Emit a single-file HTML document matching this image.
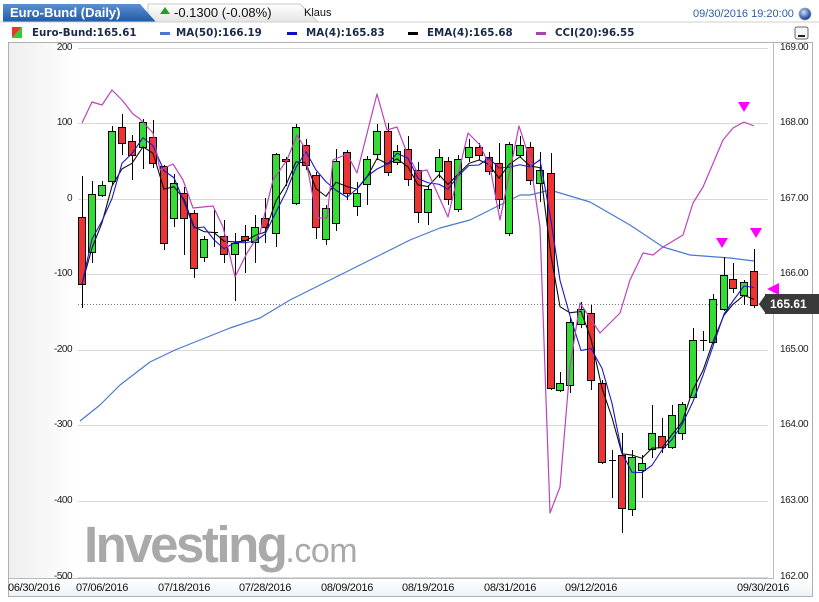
<!DOCTYPE html>
<html><head><meta charset="utf-8"><style>
*{margin:0;padding:0;box-sizing:border-box}
body{width:819px;height:602px;background:#fff;font-family:"Liberation Sans",Arial,sans-serif;position:relative;overflow:hidden}
.t{position:absolute;white-space:nowrap}
.lg{font-size:10.3px;font-weight:bold;color:#1a2a48;font-family:'DejaVu Sans',sans-serif;top:27px}
</style></head><body>
<svg width="819" height="602" style="position:absolute;left:0;top:0" id="s">
<defs>
<linearGradient id="tab" x1="0" y1="0" x2="0" y2="1"><stop offset="0" stop-color="#5b8fd0"/><stop offset="1" stop-color="#1f5aa8"/></linearGradient>
<linearGradient id="tab2" x1="0" y1="0" x2="0" y2="1"><stop offset="0" stop-color="#ffffff"/><stop offset="1" stop-color="#e4e4e4"/></linearGradient>
<linearGradient id="lg" x1="0" y1="0" x2="1" y2="0"><stop offset="0" stop-color="#efefef"/><stop offset="1" stop-color="#ffffff"/></linearGradient>
<linearGradient id="ax" x1="0" y1="0" x2="0" y2="1"><stop offset="0" stop-color="#ffffff"/><stop offset="1" stop-color="#eef3f8"/></linearGradient>
<radialGradient id="ball" cx="0.4" cy="0.35" r="0.6"><stop offset="0" stop-color="#cfe0ff"/><stop offset="1" stop-color="#1a3f95"/></radialGradient>
</defs>
<path d="M148,4 L300,4 L318,22 L148,22 Z" fill="url(#tab2)" stroke="#c8c8c8"/>
<path d="M3,4 L140,4 L156,22 L3,22 Z" fill="url(#tab)"/>
<line x1="0" y1="22" x2="819" y2="22" stroke="#cfcfcf"/>
<circle cx="805" cy="14" r="6" fill="url(#ball)" stroke="#8aa" stroke-width="0.8"/>
<polygon points="12,27 22,27 12,38" fill="#e33"/><polygon points="22,27 22,38 12,38" fill="#3c3"/>
<rect x="160" y="32" width="10" height="3" fill="#4a78d0"/>
<rect x="287" y="32" width="10" height="3" fill="#1010c0"/>
<rect x="408" y="32" width="10" height="3" fill="#000"/>
<rect x="536" y="32" width="10" height="3" fill="#b040b0"/>
<rect x="795" y="27" width="13" height="12" rx="2" fill="#f6f6f6" stroke="#666"/>
<rect x="798" y="35" width="7" height="2" fill="#222"/>
<rect x="8.5" y="42.5" width="804" height="554" fill="#fff" stroke="#b0b0b0"/>
<rect x="9" y="43" width="70" height="536" fill="url(#lg)"/>
<rect x="9" y="579" width="803" height="17" fill="url(#ax)"/>
<line x1="9" y1="578.5" x2="773" y2="578.5" stroke="#bbb"/>
<line x1="773.5" y1="43" x2="773.5" y2="579" stroke="#bbb"/>
<g stroke="#d8d8d8" stroke-width="1" id="grid"></g>
<line x1="78" y1="304.5" x2="768" y2="304.5" stroke="#777" stroke-dasharray="1,2"/>
<g id="c"></g>
</svg>
<div class="t" style="left:10px;top:5px;color:#fff;font-size:13px;font-weight:bold">Euro-Bund (Daily)</div>
<div class="t" style="left:160px;top:7px;width:0;height:0;border-left:5px solid transparent;border-right:5px solid transparent;border-bottom:7px solid #2a9a2a"></div>
<div class="t" style="left:174px;top:5px;font-size:13px;color:#111">-0.1300 (-0.08%)</div>
<div class="t" style="left:304px;top:7px;font-size:11px;color:#111">Klaus</div>
<div class="t" style="left:693px;top:8px;font-size:11px;color:#2a5da8">09/30/2016 19:20:00</div>
<div class="t lg" style="left:32px">Euro-Bund:165.61</div>
<div class="t lg" style="left:176px">MA(50):166.19</div>
<div class="t lg" style="left:306px">MA(4):165.83</div>
<div class="t lg" style="left:427px">EMA(4):165.68</div>
<div class="t lg" style="left:555px">CCI(20):96.55</div>
<div id="labels"></div>
<div class="t" style="left:84px;top:515px;font-size:51px;font-weight:bold;color:#a9a9a9;letter-spacing:-2.5px">Investing<span style="font-weight:normal;font-size:34px;letter-spacing:-0.5px">.com</span></div>
<div class="t" style="left:765px;top:294px;width:54px;height:20px;background:#3a3a3a;color:#fff;font-size:12px;font-weight:bold;line-height:20px;padding-left:5px">165.61</div>
<div class="t" style="left:759px;top:294px;width:0;height:0;border-top:10px solid transparent;border-bottom:10px solid transparent;border-right:7px solid #3a3a3a"></div>
<script>
var NS="http://www.w3.org/2000/svg",g=document.getElementById('c'),gr=document.getElementById('grid');
function el(p,t,a){var e=document.createElementNS(NS,t);for(var k in a)e.setAttribute(k,a[k]);p.appendChild(e);return e}
var ys=[48,123,199,274,350,425,501,577];
ys.forEach(function(y){el(gr,'line',{x1:78,x2:768,y1:y+.5,y2:y+.5})});
var L=document.getElementById('labels'),h='';
var ll=['200','100','0','-100','-200','-300','-400','-500'],rl=['169.00','168.00','167.00','166.00','165.00','164.00','163.00','162.00'];
ys.forEach(function(y,i){h+='<div class="t" style="right:747px;top:'+(y-6)+'px;font-size:10px;color:#222;letter-spacing:-0.5px">'+ll[i]+'</div><div class="t" style="left:780px;top:'+(y-6)+'px;font-size:10px;color:#222;letter-spacing:-0.4px">'+rl[i]+'</div>'});
[['06/30/2016',36],['07/06/2016',104],['07/18/2016',186],['07/28/2016',267],['08/09/2016',349],['08/19/2016',430],['08/31/2016',512],['09/12/2016',593],['09/30/2016',765]].forEach(function(a){h+='<div class="t" style="left:'+(a[1]-28)+'px;top:582px;font-size:11px;color:#111;letter-spacing:-0.3px">'+a[0]+'</div>'});
L.innerHTML=h;
var C=[[82,217,284,176,308,'r'],[92,194,252,181,263,'g'],[102,185,195,181,197,'g'],[112,131,181,126,185,'g'],[122,127,143,114,155,'r'],[132,141,155,135,180,'r'],[143,122,147,119,169,'g'],[153,137,163,120,168,'r'],[164,166,243,165,250,'r'],[174,183,218,174,227,'g'],[184,193,218,187,255,'r'],[194,213,268,210,278,'r'],[204,239,257,236,262,'g'],[214,232,234,210,247,'d'],[224,236,254,220,263,'r'],[235,243,254,233,301,'g'],[245,236,240,225,273,'r'],[255,227,242,215,263,'g'],[265,218,227,198,243,'r'],[276,154,233,153,247,'g'],[286,159,161,157,186,'r'],[296,127,203,124,205,'g'],[306,145,165,139,170,'r'],[316,175,227,172,239,'r'],[326,208,239,205,245,'g'],[336,161,223,149,231,'g'],[347,152,193,150,200,'r'],[357,193,206,182,216,'g'],[367,159,184,156,205,'g'],[377,131,154,124,160,'g'],[388,131,172,123,176,'r'],[397,151,162,145,165,'g'],[408,149,179,136,186,'r'],[418,170,212,162,223,'r'],[428,189,212,185,225,'g'],[439,157,171,149,178,'g'],[448,161,199,157,205,'r'],[458,159,209,155,212,'g'],[469,147,157,139,162,'g'],[479,147,155,143,160,'r'],[489,157,171,152,175,'r'],[499,163,199,143,209,'r'],[509,144,233,142,236,'g'],[520,145,155,136,158,'g'],[530,147,180,142,185,'r'],[540,170,183,152,202,'g'],[551,173,388,153,390,'r'],[560,383,390,372,392,'g'],[570,322,385,318,393,'g'],[581,309,324,302,328,'g'],[591,313,380,305,390,'r'],[602,383,462,380,464,'r'],[612,460,462,450,498,'d'],[622,455,508,433,533,'r'],[632,457,509,450,516,'g'],[642,463,470,455,498,'g'],[652,433,449,405,458,'g'],[662,436,447,418,453,'r'],[672,415,447,405,449,'g'],[682,404,433,402,440,'g'],[693,340,397,328,398,'g'],[703,340,342,331,351,'d'],[713,299,342,294,344,'g'],[724,275,309,257,311,'g'],[733,279,288,263,293,'r'],[744,282,295,280,305,'g'],[754,271,305,249,308,'r']];
function pl(pts,col,w){el(g,'polyline',{points:pts.map(function(p){return p.join(',')}).join(' '),fill:'none',stroke:col,'stroke-width':w||1,'stroke-linejoin':'round'})}
pl([[80,421],[100,405],[120,385],[150,362],[175,350],[200,340],[230,328],[260,318],[290,300],[320,285],[350,270],[380,255],[410,240],[440,228],[470,220],[500,205],[520,195],[530,195],[550,190],[590,202],[630,225],[663,247],[690,255],[730,258],[754,261]],'#4a78d0',1.2);
var cl=C.map(function(c){return c[5]=='g'?c[1]:c[2]}),ma=[],ema=[],e=cl[0];
cl.forEach(function(v,i){var s=0,n=0;for(var j=Math.max(0,i-3);j<=i;j++){s+=cl[j];n++}ma.push([C[i][0],s/n]);e=i?e+0.4*(v-e):v;ema.push([C[i][0],e])});
C.forEach(function(c){var col=c[5]=='g'?'#33dd33':'#ee3333';
el(g,'line',{x1:c[0]+.5,x2:c[0]+.5,y1:c[3],y2:c[4],stroke:'#000'});
if(c[5]=='d')el(g,'line',{x1:c[0]-3,x2:c[0]+4,y1:c[1]+.5,y2:c[1]+.5,stroke:'#000'});
else el(g,'rect',{x:c[0]-3.5,y:c[1]+.5,width:7,height:Math.max(2,c[2]-c[1]),fill:col,stroke:'#000','stroke-width':1})});
pl(ema,'#111',1.1);pl(ma,'#1818c8',1.1);
pl([[82,123],[92,102],[102,105],[112,90],[122,100],[133,114],[140,119],[153,133],[160,170],[173,164],[183,180],[193,208],[213,206],[223,227],[235,277],[247,253],[260,233],[273,180],[287,160],[297,135],[303,145],[317,218],[327,218],[333,160],[347,154],[357,173],[377,94],[387,130],[397,127],[407,153],[417,172],[427,170],[448,217],[468,133],[480,145],[490,167],[500,220],[519,126],[530,160],[540,227],[550,513],[560,487],[570,367],[580,303],[600,333],[620,313],[630,280],[643,253],[653,255],[663,247],[683,235],[693,203],[703,187],[723,140],[733,128],[744,122],[754,126]],'#bb44bb',1.2);
[[722,238],[756,228],[744,102]].forEach(function(p){el(g,'polygon',{points:(p[0]-6)+','+p[1]+' '+(p[0]+6)+','+p[1]+' '+p[0]+','+(p[1]+10),fill:'#ff00ff'})});
el(g,'polygon',{points:'767,289 779,283 779,295',fill:'#ff00ff'});
</script>
</body></html>
